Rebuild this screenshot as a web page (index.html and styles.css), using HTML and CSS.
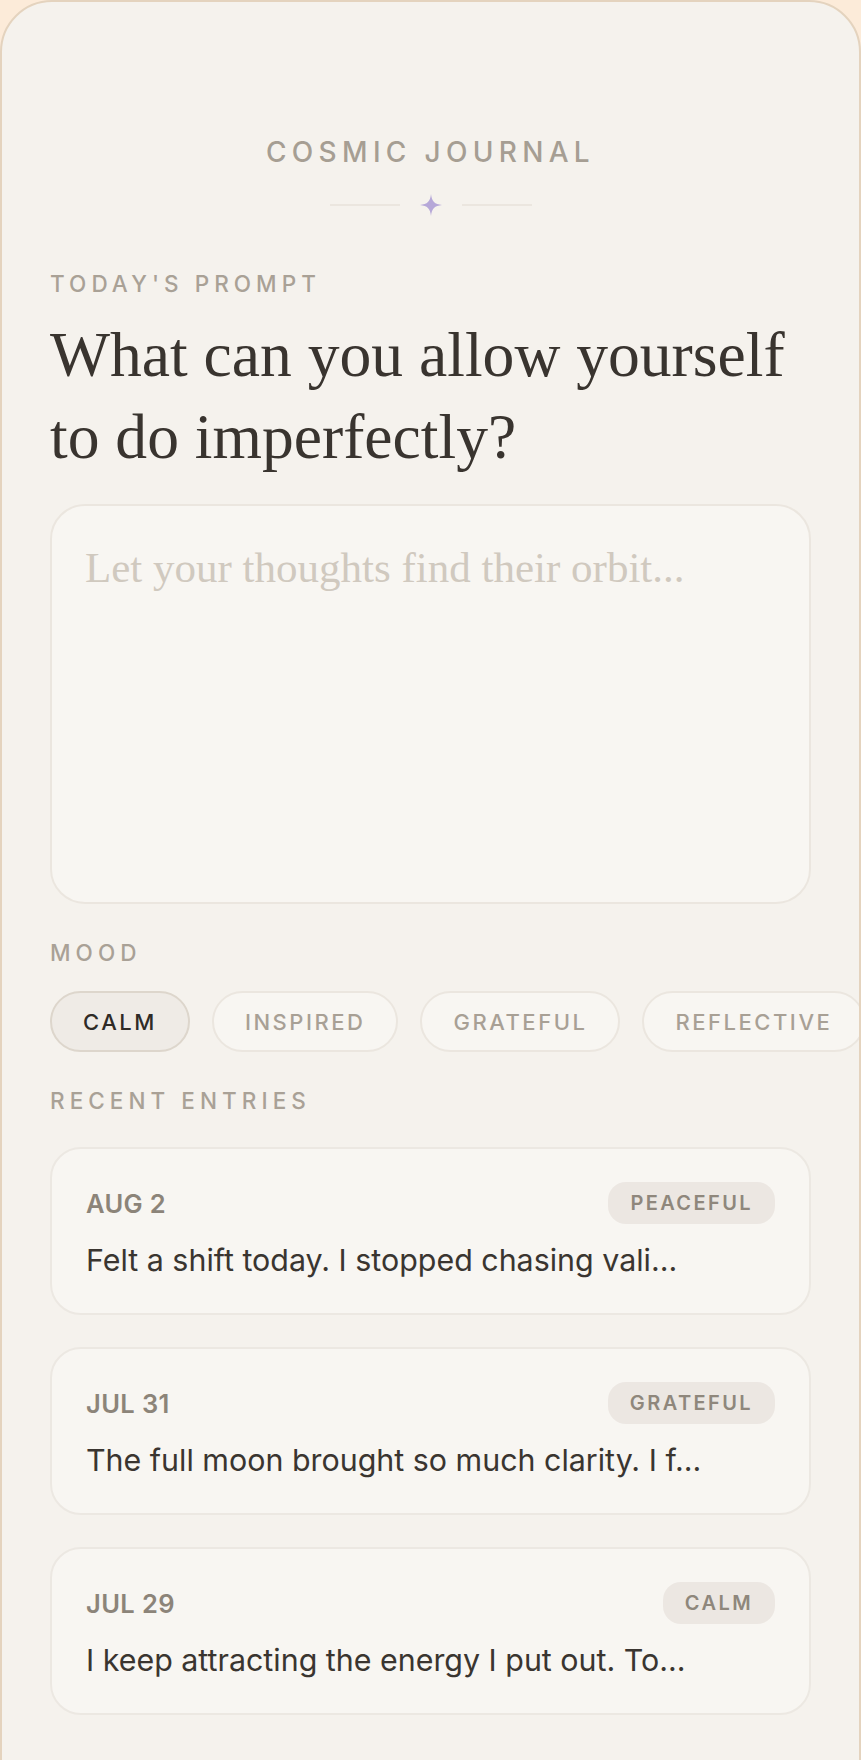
FILE: index.html
```html
<!DOCTYPE html>
<html lang="en">
  <head>
    <meta charset="UTF-8" />
    <meta name="viewport" content="width=device-width, initial-scale=1.0" />
    <title>Cosmic Journal</title>
    <link rel="stylesheet" href="styles.css">
  </head>
  <body>
    <div class="phone">
      <header class="brand">
        <h1 class="brand-title">COSMIC JOURNAL</h1>
        <div class="divider">
          <span class="divider-line"></span>
          <svg class="sparkle" viewBox="0 0 24 24" width="22" height="22">
            <path d="M12 0C12.8 8 16 11.2 24 12C16 12.8 12.8 16 12 24C11.2 16 8 12.8 0 12C8 11.2 11.2 8 12 0Z" />
          </svg>
          <span class="divider-line"></span>
        </div>
      </header>

      <section>
        <h2 class="label label-first">TODAY'S PROMPT</h2>
        <p class="prompt">What can you allow yourself to do imperfectly?</p>
        <textarea class="entry" placeholder="Let your thoughts find their orbit..."></textarea>
      </section>

      <section>
        <h2 class="label">MOOD</h2>
        <div class="chips">
          <button class="chip chip-active">CALM</button>
          <button class="chip">INSPIRED</button>
          <button class="chip">GRATEFUL</button>
          <button class="chip">REFLECTIVE</button>
        </div>
      </section>

      <section>
        <h2 class="label">RECENT ENTRIES</h2>
        <div class="entries">
          <div class="entry-card">
            <div class="entry-head">
              <span class="entry-date">AUG 2</span>
              <span class="tag">PEACEFUL</span>
            </div>
            <p class="entry-text">Felt a shift today. I stopped chasing vali...</p>
          </div>
          <div class="entry-card">
            <div class="entry-head">
              <span class="entry-date">JUL 31</span>
              <span class="tag">GRATEFUL</span>
            </div>
            <p class="entry-text">The full moon brought so much clarity. I f...</p>
          </div>
          <div class="entry-card">
            <div class="entry-head">
              <span class="entry-date">JUL 29</span>
              <span class="tag">CALM</span>
            </div>
            <p class="entry-text">I keep attracting the energy I put out. To...</p>
          </div>
        </div>
      </section>
    </div>
  </body>
</html>
```

FILE: styles.css
```css
body {
  margin: 0;
  background: #fcebd9;
  font-family: Inter, "Noto Sans", sans-serif;
}
.phone {
  box-sizing: border-box;
  width: 861px;
  min-height: 1820px;
  padding: 133px 48px 100px;
  background: #f5f2ed;
  border: 2px solid #e4d3be;
  border-radius: 52px;
  overflow: hidden;
}
.brand {
  text-align: center;
}
.brand-title {
  margin: 0;
  font-size: 28px;
  line-height: 34px;
  font-weight: 500;
  letter-spacing: 0.19em;
  color: #a69e93;
}
.divider {
  display: flex;
  align-items: center;
  justify-content: center;
  gap: 20px;
  margin-top: 25px;
  height: 22px;
}
.divider-line {
  width: 70px;
  height: 2px;
  background: #ebe6df;
}
.sparkle {
  display: block;
  fill: #b6a8d8;
}
.label {
  margin: 35px 0 0;
  font-size: 22.5px;
  line-height: 27px;
  font-weight: 500;
  letter-spacing: 0.225em;
  color: #a9a196;
}
.label-first {
  margin-top: 54px;
}
.prompt {
  margin: 17px 0 0;
  font-family: "Liberation Serif", serif;
  font-size: 63.6px;
  line-height: 82px;
  color: #39342f;
}
.entry {
  display: block;
  box-sizing: border-box;
  width: 100%;
  height: 400px;
  margin-top: 26px;
  padding: 28px 33px;
  background: #f8f6f2;
  border: 2px solid #ebe6df;
  border-radius: 35px;
  font-family: "Liberation Serif", serif;
  font-size: 43px;
  line-height: 1.6;
  color: #3a3530;
  resize: none;
  outline: none;
}
.entry::placeholder {
  color: #d0c9bf;
}
.chips {
  display: flex;
  gap: 22px;
  margin: 25px -48px 0 0;
  overflow: hidden;
}
.chip {
  flex: none;
  height: 61px;
  padding: 0 31px;
  background: #f8f6f2;
  border: 2px solid #ebe6df;
  border-radius: 31px;
  font-family: Inter, "Noto Sans", sans-serif;
  font-size: 22px;
  font-weight: 500;
  letter-spacing: 0.115em;
  color: #a8a095;
}
.chip-active {
  background: #efebe6;
  border-color: #ddd6cc;
  color: #2f2b27;
}
.entries {
  display: flex;
  flex-direction: column;
  gap: 32px;
  margin-top: 33px;
}
.entry-card {
  box-sizing: border-box;
  height: 168px;
  padding: 33px 34px;
  background: #f8f6f2;
  border: 2px solid #ece8e2;
  border-radius: 31px;
}
.entry-head {
  display: flex;
  align-items: center;
  justify-content: space-between;
  height: 42px;
}
.entry-date {
  font-size: 25.5px;
  font-weight: 600;
  letter-spacing: 0.015em;
  color: #8c8479;
}
.tag {
  padding: 0 22px;
  line-height: 42px;
  background: #ece7e2;
  border-radius: 18px;
  font-size: 20px;
  font-weight: 600;
  letter-spacing: 0.12em;
  color: #8f877c;
}
.entry-text {
  margin: 17px 0 0;
  font-size: 30.4px;
  line-height: 39px;
  color: #3a3530;
}
```
